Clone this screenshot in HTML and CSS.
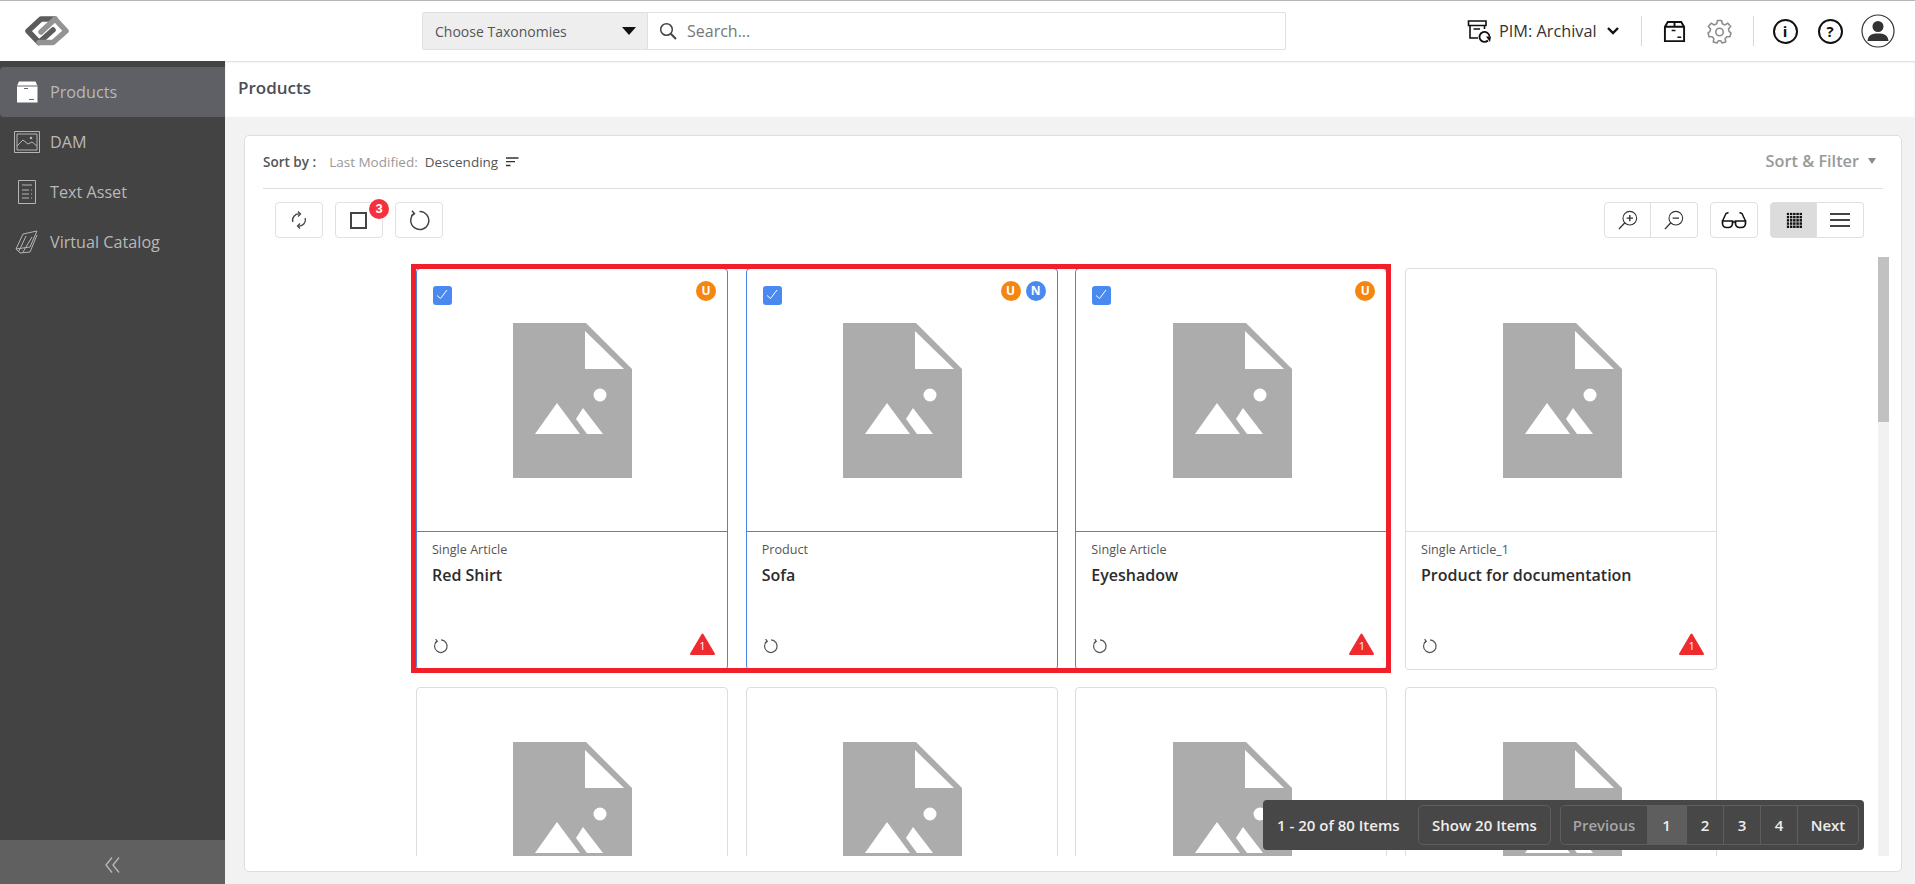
FILE: index.html
```html
<!DOCTYPE html>
<html lang="en">
<head>
  <meta charset="UTF-8" />
  <title>Products</title>
  <link rel="stylesheet" href="styles.css">
</head>
<body>
  <svg class="defs" width="0" height="0">
    <symbol id="placeholder" viewBox="0 0 119 155">
      <path fill="#acacac" d="M0 0H73L119 46V155H0Z" />
      <path fill="#fff" d="M72 8V46H111Z" />
      <circle fill="#fff" cx="87" cy="72" r="6.5" />
      <path fill="#fff" d="M44 80L22 111H67Z" />
      <path fill="#fff" d="M70 85L63 96L74 111H90Z" />
    </symbol>
    <symbol id="history" viewBox="0 0 16 16">
      <path fill="none" stroke="#555" stroke-width="1.2" d="M4 3.2A6.3 6.3 0 1 0 8 1.9" />
      <path fill="none" stroke="#555" stroke-width="1.2" d="M2.6 1.2L4.3 3.4L2 4.8" />
    </symbol>
    <symbol id="warn" viewBox="0 0 25 22">
      <path fill="#f02b30" stroke="#f02b30" stroke-width="2" stroke-linejoin="round" d="M12.5 1.5L24 21H1Z" />
    </symbol>
    <symbol id="box" viewBox="0 0 24 24">
      <path fill="none" stroke="#111" stroke-width="2" d="M2 7L5 2H19L22 7V22H2ZM2 7H22M12 2V7" />
      <path fill="none" stroke="#111" stroke-width="1.5" d="M9 11H13M15 18H19" />
    </symbol>
  </svg>

  <header class="topbar">
    <svg class="logo" viewBox="0 0 46 32" width="46" height="32">
      <path fill="none" stroke="#5c5c5c" stroke-width="5.5" stroke-linejoin="round" stroke-linecap="round" d="M31 4H17L4 16L15 27.5L29 15" />
      <path fill="none" stroke="#939393" stroke-width="5.5" stroke-linejoin="round" stroke-linecap="round" d="M15 27.5H29L42 16L31 4L17 17" />
    </svg>

    <div class="searchbar">
      <div class="taxonomy">
        <span>Choose Taxonomies</span>
        <span class="taxonomy-caret"></span>
      </div>
      <div class="search-field">
        <svg viewBox="0 0 18 18" width="18" height="18">
          <circle cx="7.5" cy="7.5" r="5.8" fill="none" stroke="#444" stroke-width="1.5" />
          <path stroke="#444" stroke-width="2" d="M11.8 11.8L17 17" />
        </svg>
        <span>Search...</span>
      </div>
    </div>

    <div class="top-actions">
      <svg class="ic-mode" viewBox="0 0 24 24" width="24" height="24">
        <path fill="none" stroke="#111" stroke-width="1.6" d="M1.5 2H19V6.5H1.5ZM3 6.5V19H11M17.5 6.5V10M6.5 10H13" />
        <path fill="none" stroke="#111" stroke-width="1.8" d="M22.5 17.5A5 5 0 1 0 21 21.5" />
        <path fill="#111" d="M19 17.5H24L23 23Z" />
      </svg>
      <span class="mode-label">PIM: Archival</span>
      <svg class="ic-chevron" viewBox="0 0 14 10" width="14" height="10">
        <path fill="none" stroke="#111" stroke-width="2.4" d="M2 2L7 7L12 2" />
      </svg>
      <span class="top-divider"></span>
      <svg viewBox="0 0 24 24" width="23" height="23"><use href="#box" /></svg>
      <svg class="ic-gear" viewBox="0 0 24 24" width="25" height="25">
        <path fill="none" stroke="#8c8c8c" stroke-width="1.5" stroke-linejoin="round" d="M10 1.5H14L14.7 4.6L17.3 5.7L20 4L22.7 7.3L20.6 9.7L21.2 11.9L23 13.5L22 17L19 17L17.4 19L18 22L14.5 23L13 20.8H11L9.5 23L6 22L6.6 19L5 17L2 17L1 13.5L2.8 11.9L3.4 9.7L1.3 7.3L4 4L6.7 5.7L9.3 4.6Z" />
        <circle cx="12" cy="12.5" r="3.6" fill="none" stroke="#8c8c8c" stroke-width="1.5" />
      </svg>
      <span class="top-divider second"></span>
      <span class="round-btn">i</span>
      <span class="round-btn">?</span>
      <svg class="ic-user" viewBox="0 0 34 34" width="34" height="34">
        <circle cx="17" cy="17" r="16" fill="#fff" stroke="#333" stroke-width="1.2" />
        <circle cx="17" cy="12.5" r="5.5" fill="#333" />
        <path fill="#333" d="M6.5 27C7 21 11 19.5 17 19.5S27 21 27.5 27Z" />
      </svg>
    </div>
  </header>

  <div class="shell">
    <aside class="sidebar">
      <ul class="nav">
        <li class="nav-item active">
          <svg viewBox="0 0 22 22" width="22" height="22">
            <path fill="#fff" d="M1 5L3 .5H19.5L21.5 5V21.5H1Z" />
            <path stroke="#666" stroke-width="1" d="M1 5H21.5M8 7.5H12M13 18.5H18" />
          </svg>
          <span>Products</span>
        </li>
        <li class="nav-item">
          <svg viewBox="0 0 26 22" width="26" height="22">
            <path fill="none" stroke="#b5b5b5" stroke-width="1" d="M.5.5H25.5V21.5H.5ZM3 3H23V19H3Z" />
            <path fill="none" stroke="#b5b5b5" stroke-width="1" d="M3 15L9 9L14 13L18 11L23 15" />
            <circle cx="17" cy="7" r="1.3" fill="#b5b5b5" />
          </svg>
          <span>DAM</span>
        </li>
        <li class="nav-item">
          <svg viewBox="0 0 22 24" width="22" height="24">
            <path fill="none" stroke="#b5b5b5" stroke-width="1" d="M2.5.5H19.5V23.5H2.5Z" />
            <path stroke="#b5b5b5" stroke-width="1" d="M6 5H16M6 10H13M15 10H16M6 14H13M15 14H16M6 18H13M15 18H16" />
          </svg>
          <span>Text Asset</span>
        </li>
        <li class="nav-item">
          <svg viewBox="0 0 24 24" width="24" height="24">
            <path fill="none" stroke="#b5b5b5" stroke-width="1" d="M1 19L8 4L22 1L15 17L1 19L5 23L15 22L22 5" />
            <path fill="none" stroke="#b5b5b5" stroke-width="1" d="M4 21L11 6M8 22L17 7" />
          </svg>
          <span>Virtual Catalog</span>
        </li>
      </ul>
      <div class="sidebar-foot">
        <svg viewBox="0 0 15 16" width="15" height="16">
          <path fill="none" stroke="#b9b9b9" stroke-width="1.3" d="M7 .5L1 8L7 15.5M14 .5L8 8L14 15.5" />
        </svg>
      </div>
    </aside>

    <main class="content">
      <div class="page-title">Products</div>

      <section class="panel">
        <div class="sort-row">
          <div class="sort-left">
            <strong>Sort by :</strong>
            <span class="sort-key">Last Modified:</span>
            <span class="sort-value">Descending</span>
            <svg viewBox="0 0 13 10" width="13" height="10">
              <path stroke="#333" stroke-width="1.3" d="M0 1H12.5M0 4.7H9M0 8.5H4.5" />
            </svg>
          </div>
          <div class="sort-filter">Sort &amp; Filter <span class="sort-caret"></span></div>
        </div>

        <div class="toolbar">
          <div class="tool-group">
            <button class="tool-btn">
              <svg viewBox="0 0 18 18" width="18" height="18">
                <path fill="none" stroke="#444" stroke-width="1.3" d="M2.8 11A6.3 6.3 0 0 1 9.5 3M15.2 7A6.3 6.3 0 0 1 8.5 15" />
                <path fill="none" stroke="#444" stroke-width="1.3" d="M8 .5L10.5 3L8 5.5M10 12.5L7.5 15L10 17.5" />
              </svg>
            </button>
            <button class="tool-btn">
              <span class="select-box"></span>
              <span class="count-badge">3</span>
            </button>
            <button class="tool-btn">
              <svg viewBox="0 0 20 20" width="21" height="21">
                <path fill="none" stroke="#444" stroke-width="1.4" d="M5 3.2A8.6 8.6 0 1 0 10 1.4" />
                <path fill="none" stroke="#444" stroke-width="1.4" d="M2.8 .8L5.2 3.4L2.2 5.6" />
              </svg>
            </button>
          </div>
          <div class="tool-group">
            <div class="btn-pair">
              <button class="tool-btn">
                <svg viewBox="0 0 22 22" width="20" height="20">
                  <circle cx="13" cy="9" r="7.5" fill="none" stroke="#333" stroke-width="1.2" />
                  <path stroke="#333" stroke-width="1.5" d="M7.5 14L1 21M9.5 9H16.5M13 5.5V12.5" />
                </svg>
              </button>
              <button class="tool-btn">
                <svg viewBox="0 0 22 22" width="20" height="20">
                  <circle cx="13" cy="9" r="7.5" fill="none" stroke="#333" stroke-width="1.2" />
                  <path stroke="#333" stroke-width="1.5" d="M7.5 14L1 21M9.5 9H16.5" />
                </svg>
              </button>
            </div>
            <button class="tool-btn">
              <svg viewBox="0 0 26 18" width="26" height="18">
                <path fill="none" stroke="#111" stroke-width="1.5" d="M1.5 10L5 2.5L7.5 1.5M24.5 10L21 2.5L18.5 1.5" />
                <path fill="none" stroke="#111" stroke-width="1.7" d="M1.5 10H11.5V12.5A4 4 0 0 1 7.5 16.5H5.5A4 4 0 0 1 1.5 12.5ZM14.5 10H24.5V12.5A4 4 0 0 1 20.5 16.5H18.5A4 4 0 0 1 14.5 12.5ZM11.5 11H14.5" />
              </svg>
            </button>
            <div class="btn-pair">
              <button class="tool-btn on">
                <span class="grid-glyph"></span>
              </button>
              <button class="tool-btn">
                <svg viewBox="0 0 20 16" width="20" height="16">
                  <path stroke="#444" stroke-width="2" d="M0 2H20M0 8H20M0 14H20" />
                </svg>
              </button>
            </div>
          </div>
        </div>

        <div class="scroller">
          <div class="card-grid">
            <article class="card selected">
              <span class="check"><svg viewBox="0 0 18 18" width="18" height="18"><path fill="none" stroke="#fff" stroke-width="1" d="M4 9.5L7.5 12.5L14 4" /></svg></span>
              <div class="badges"><span class="badge orange">U</span></div>
              <div class="card-img"><svg width="119" height="155"><use href="#placeholder" /></svg></div>
              <div class="card-body">
                <div class="card-type">Single Article</div>
                <div class="card-name">Red Shirt</div>
                <div class="card-foot">
                  <svg width="16" height="16"><use href="#history" /></svg>
                  <span class="warn"><svg width="25" height="22"><use href="#warn" /></svg><b>1</b></span>
                </div>
              </div>
            </article>
            <article class="card selected">
              <span class="check"><svg viewBox="0 0 18 18" width="18" height="18"><path fill="none" stroke="#fff" stroke-width="1" d="M4 9.5L7.5 12.5L14 4" /></svg></span>
              <div class="badges"><span class="badge orange">U</span><span class="badge blue">N</span></div>
              <div class="card-img"><svg width="119" height="155"><use href="#placeholder" /></svg></div>
              <div class="card-body">
                <div class="card-type">Product</div>
                <div class="card-name">Sofa</div>
                <div class="card-foot">
                  <svg width="16" height="16"><use href="#history" /></svg>
                </div>
              </div>
            </article>
            <article class="card selected">
              <span class="check"><svg viewBox="0 0 18 18" width="18" height="18"><path fill="none" stroke="#fff" stroke-width="1" d="M4 9.5L7.5 12.5L14 4" /></svg></span>
              <div class="badges"><span class="badge orange">U</span></div>
              <div class="card-img"><svg width="119" height="155"><use href="#placeholder" /></svg></div>
              <div class="card-body">
                <div class="card-type">Single Article</div>
                <div class="card-name">Eyeshadow</div>
                <div class="card-foot">
                  <svg width="16" height="16"><use href="#history" /></svg>
                  <span class="warn"><svg width="25" height="22"><use href="#warn" /></svg><b>1</b></span>
                </div>
              </div>
            </article>
            <article class="card">
              <div class="card-img"><svg width="119" height="155"><use href="#placeholder" /></svg></div>
              <div class="card-body">
                <div class="card-type">Single Article_1</div>
                <div class="card-name">Product for documentation</div>
                <div class="card-foot">
                  <svg width="16" height="16"><use href="#history" /></svg>
                  <span class="warn"><svg width="25" height="22"><use href="#warn" /></svg><b>1</b></span>
                </div>
              </div>
            </article>
            <article class="card"><div class="card-img"><svg width="119" height="155"><use href="#placeholder" /></svg></div></article>
            <article class="card"><div class="card-img"><svg width="119" height="155"><use href="#placeholder" /></svg></div></article>
            <article class="card"><div class="card-img"><svg width="119" height="155"><use href="#placeholder" /></svg></div></article>
            <article class="card"><div class="card-img"><svg width="119" height="155"><use href="#placeholder" /></svg></div></article>
            <div class="red-frame"></div>
          </div>
          <div class="scroll-track"><div class="scroll-thumb"></div></div>
        </div>

        <div class="pager-bar">
          <span class="pager-count">1 - 20 of 80 Items</span>
          <span class="pager-show">Show 20 Items</span>
          <div class="pager">
            <span class="page prev">Previous</span>
            <span class="page current">1</span>
            <span class="page">2</span>
            <span class="page">3</span>
            <span class="page">4</span>
            <span class="page next">Next</span>
          </div>
        </div>
      </section>
    </main>
  </div>
</body>
</html>
```

FILE: styles.css
```css
* {
  box-sizing: border-box;
}
html, body {
  height: 100%;
}
body {
  margin: 0;
  font-family: 'Open Sans', 'Noto Sans', sans-serif;
  background: #f2f2f2;
  color: #333;
  overflow: hidden;
  display: flex;
  flex-direction: column;
}
.defs {
  position: absolute;
}
svg {
  display: block;
}

/* top bar */
.topbar {
  height: 61px;
  flex: none;
  background: #fff;
  border-top: 1px solid #b5b5b5;
  display: flex;
  align-items: center;
  padding-left: 24px;
  position: relative;
}
.logo {
  margin-top: -1px;
}
.searchbar {
  width: 864px;
  height: 38px;
  margin-left: 352px;
  display: flex;
  border: 1px solid #e0e0e0;
  border-radius: 2px;
}
.taxonomy {
  width: 225px;
  background: #eee;
  border-right: 1px solid #e0e0e0;
  display: flex;
  align-items: center;
  justify-content: space-between;
  padding: 0 11px 0 12px;
  font-size: 14px;
  color: #555;
}
.taxonomy-caret {
  border-left: 7px solid transparent;
  border-right: 7px solid transparent;
  border-top: 8px solid #111;
}
.search-field {
  flex: 1;
  display: flex;
  align-items: center;
  gap: 10px;
  padding-left: 11px;
  font-size: 16px;
  color: #777;
}
.top-actions {
  margin-left: 181px;
  display: flex;
  align-items: center;
}
.mode-label {
  margin-left: 8px;
  font-size: 16.3px;
  color: #333;
}
.ic-chevron {
  margin-left: 9px;
}
.top-divider {
  width: 1px;
  height: 30px;
  background: #d8d8d8;
  margin: 0 21px 0 21px;
}
.top-divider.second {
  margin-right: 19px;
}
.ic-gear {
  margin-left: 21px;
}
.round-btn {
  width: 25px;
  height: 25px;
  border: 2px solid #111;
  border-radius: 50%;
  display: flex;
  align-items: center;
  justify-content: center;
  font-size: 15px;
  font-weight: 700;
  color: #111;
  margin-right: 20px;
}
.round-btn + .round-btn {
  margin-right: 17px;
}
.ic-user {
  margin-left: 1px;
}

/* layout */
.shell {
  flex: 1;
  min-height: 0;
  display: flex;
}
.sidebar {
  width: 225px;
  flex: none;
  background: #434343;
  padding-top: 6px;
  display: flex;
  flex-direction: column;
}
.nav {
  list-style: none;
  margin: 0;
  padding: 0;
  flex: 1;
}
.nav-item {
  height: 50px;
  display: flex;
  align-items: center;
  padding-left: 14px;
  font-size: 16.2px;
  color: #b8b8b8;
}
.nav-item svg {
  width: 26px;
  flex: none;
}
.nav-item span {
  margin-left: 10px;
}
.nav-item.active {
  background: #5f6065;
  border-radius: 4px 0 0 4px;
}
.sidebar-foot {
  height: 44px;
  padding-top: 6px;
  background: #606060;
  display: flex;
  align-items: center;
  justify-content: center;
}
.content {
  flex: 1;
  min-width: 0;
  display: flex;
  flex-direction: column;
}
.page-title {
  height: 56px;
  flex: none;
  background: #fff;
  box-shadow: inset 0 1px 2px rgba(0, 0, 0, 0.15);
  padding: 15px 0 0 13px;
  font-size: 17px;
  font-weight: 600;
  color: #4d4d55;
}

/* panel */
.panel {
  position: relative;
  margin: 18px 13px 12px 19px;
  flex: 1;
  min-height: 0;
  background: #fff;
  border: 1px solid #dedede;
  border-radius: 5px;
  display: flex;
  flex-direction: column;
}
.sort-row {
  height: 53px;
  flex: none;
  margin: 0 18px;
  border-bottom: 1px solid #ddd;
  display: flex;
  align-items: center;
  justify-content: space-between;
  font-size: 13.5px;
}
.sort-left {
  display: flex;
  align-items: center;
}
.sort-left strong {
  font-weight: 600;
  color: #555;
}
.sort-key {
  margin-left: 13px;
  color: #999;
}
.sort-value {
  margin: 0 8px 0 7px;
  color: #555;
}
.sort-filter {
  font-size: 16.3px;
  font-weight: 600;
  color: #999;
  display: flex;
  align-items: center;
  gap: 9px;
  margin-top: -3px;
  padding-right: 7px;
}
.sort-caret {
  border-left: 4px solid transparent;
  border-right: 4px solid transparent;
  border-top: 6px solid #888;
}
.toolbar {
  height: 36px;
  flex: none;
  margin: 13px 37px 0 30px;
  display: flex;
  justify-content: space-between;
}
.tool-group {
  display: flex;
  gap: 12px;
}
.tool-btn {
  position: relative;
  width: 48px;
  height: 36px;
  padding: 0;
  background: #fff;
  border: 1px solid #e0e0e0;
  border-radius: 4px;
  display: flex;
  align-items: center;
  justify-content: center;
}
.btn-pair {
  display: flex;
}
.btn-pair .tool-btn:first-child {
  width: 47px;
  border-radius: 4px 0 0 4px;
}
.btn-pair .tool-btn:last-child {
  border-radius: 0 4px 4px 0;
  border-left: 0;
  width: 47px;
}
.tool-btn.on {
  background: #dcdcdc;
}
.select-box {
  width: 17px;
  height: 17px;
  border: 2px solid #444;
  margin-left: -2px;
}
.count-badge {
  position: absolute;
  top: -4px;
  right: -7px;
  width: 20px;
  height: 20px;
  border-radius: 50%;
  background: #f6303c;
  color: #fff;
  font-size: 13px;
  font-weight: 600;
  line-height: 19px;
  text-align: center;
}
.grid-glyph {
  width: 16px;
  height: 16px;
  background-color: #111;
  background-image:
    linear-gradient(#dcdcdc 1px, transparent 1px),
    linear-gradient(90deg, #dcdcdc 1px, transparent 1px);
  background-size: 3.2px 3.2px;
}

/* cards */
.scroller {
  position: relative;
  flex: 1;
  min-height: 0;
  margin-top: 19px;
  margin-bottom: 15px;
  overflow: hidden;
}
.card-grid {
  position: relative;
  display: grid;
  grid-template-columns: repeat(4, 312px);
  grid-auto-rows: 402px;
  column-gap: 17.7px;
  row-gap: 17px;
  justify-content: center;
  padding: 11px 13px 0 0;
}
.card {
  position: relative;
  background: #fff;
  border: 1px solid #ddd;
  border-radius: 4px;
  display: flex;
  flex-direction: column;
}
.card.selected {
  border-color: #4a84e0;
}
.card-img {
  height: 262px;
  flex: none;
  display: flex;
  justify-content: center;
  padding: 54px 0 0 2px;
}
.card-body {
  flex: 1;
  border-top: 1px solid #ddd;
  padding: 9px 12px 0 15px;
  display: flex;
  flex-direction: column;
}
.card.selected .card-body {
  border-top-color: #4a84e0;
}
.card-type {
  font-size: 12.6px;
  line-height: 18px;
  color: #555;
}
.card-name {
  margin-top: 5px;
  font-size: 16px;
  line-height: 22px;
  font-weight: 600;
  color: #2c2c2c;
}
.card-foot {
  margin-top: auto;
  height: 37px;
  padding: 0 0 15px 1px;
  display: flex;
  align-items: flex-end;
  justify-content: space-between;
}
.warn {
  position: relative;
  display: block;
  width: 25px;
  height: 22px;
  margin-bottom: -1px;
}
.warn b {
  position: absolute;
  left: 0;
  right: 0;
  top: 6px;
  text-align: center;
  font-size: 11px;
  line-height: 14px;
  font-weight: 400;
  color: #fff;
}
.check {
  position: absolute;
  left: 16px;
  top: 17px;
  width: 19px;
  height: 19px;
  background: #4a8af0;
  border-radius: 3px;
}
.badges {
  position: absolute;
  top: 12px;
  right: 11px;
  display: flex;
  gap: 5px;
}
.badge {
  width: 20px;
  height: 20px;
  border-radius: 50%;
  color: #fff;
  font-size: 12px;
  font-weight: 700;
  line-height: 19px;
  text-align: center;
}
.badge.orange {
  background: #f5860f;
}
.badge.blue {
  background: #4a8af0;
}
.red-frame {
  position: absolute;
  left: 166px;
  top: 7px;
  width: 980px;
  height: 409px;
  border: 5px solid #f01f29;
}
.scroll-track {
  position: absolute;
  top: 0;
  bottom: 0;
  right: 12px;
  width: 11px;
  background: #f1f1f1;
}
.scroll-thumb {
  height: 165px;
  background: #c1c1c1;
}

/* pager */
.pager-bar {
  position: absolute;
  left: 1018px;
  top: 664px;
  width: 601px;
  height: 50px;
  background: #474747;
  border-radius: 4px;
  display: flex;
  align-items: center;
  padding: 0 5px 0 14px;
  font-size: 15px;
  font-weight: 600;
  color: #eee;
}
.pager-count {
  width: 141px;
  white-space: nowrap;
}
.pager-show {
  width: 133px;
  height: 40px;
  border: 1px solid #5e5e5e;
  border-radius: 5px;
  display: flex;
  align-items: center;
  justify-content: center;
}
.pager {
  margin-left: 9px;
  height: 40px;
  flex: 1;
  border: 1px solid #5e5e5e;
  border-radius: 5px;
  display: flex;
  overflow: hidden;
}
.page {
  width: 37px;
  display: flex;
  align-items: center;
  justify-content: center;
  border-left: 1px solid #5e5e5e;
}
.page.prev {
  width: 86px;
  border-left: 0;
  color: #a5a5a5;
}
.page.current {
  width: 39px;
  background: #5e5e5e;
  border-left: 0;
}
.page.next {
  flex: 1;
}
```
